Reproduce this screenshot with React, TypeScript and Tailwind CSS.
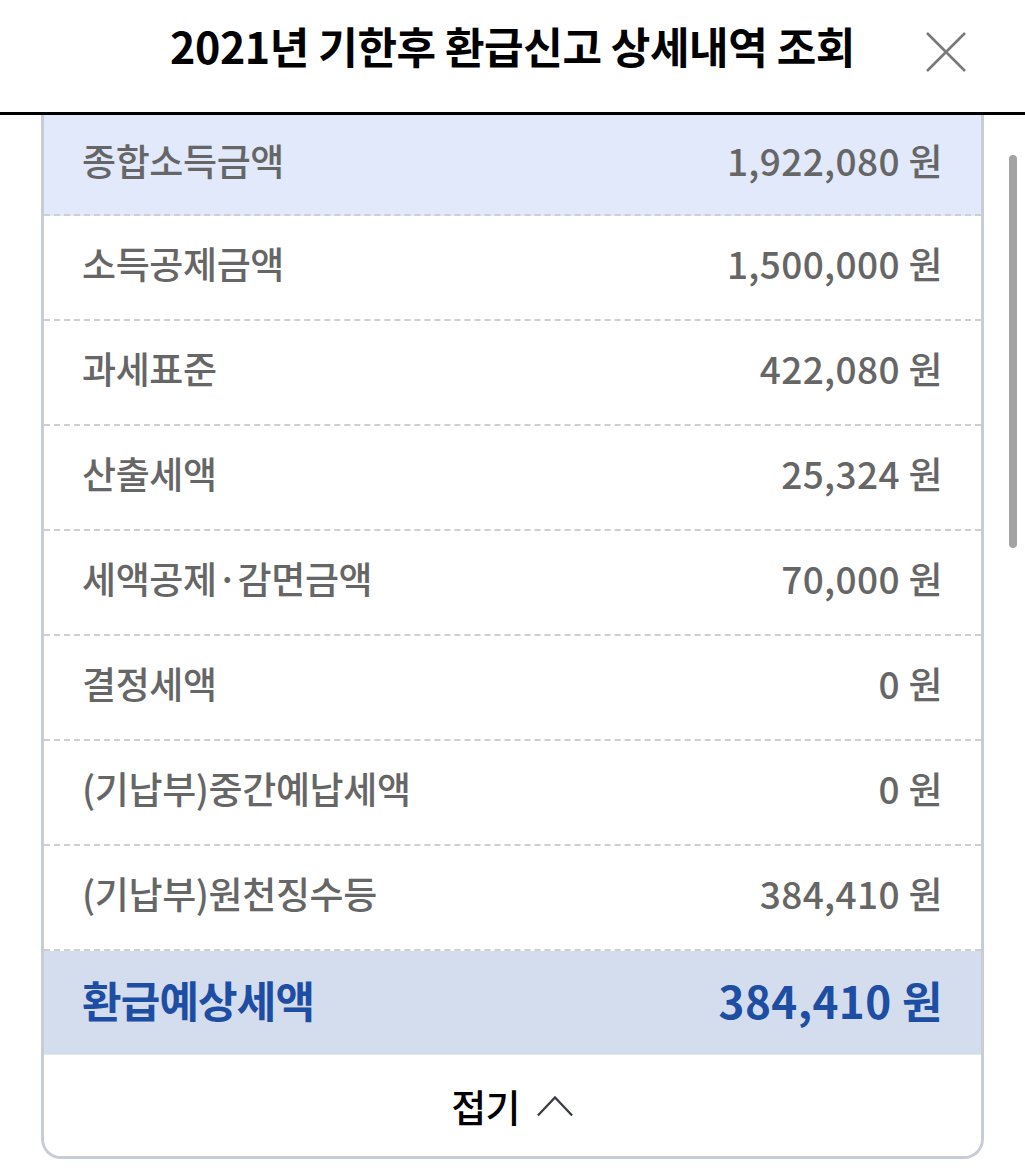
import React from "react";

const rows = [
  { label: "종합소득금액", value: "1,922,080" },
  { label: "소득공제금액", value: "1,500,000" },
  { label: "과세표준", value: "422,080" },
  { label: "산출세액", value: "25,324" },
  { label: "세액공제·감면금액", value: "70,000" },
  { label: "결정세액", value: "0" },
  { label: "(기납부)중간예납세액", value: "0" },
  { label: "(기납부)원천징수등", value: "384,410" },
];

const font = { fontFamily: '"Noto Sans CJK KR", "Noto Sans", sans-serif' };

export default function App() {
  return (
    <div className="relative w-[1025px] h-[1173px] bg-white overflow-hidden" style={font}>
      {/* Header */}
      <div className="relative h-[115px] flex items-center justify-center border-b-[3px] border-black">
        <h1 className="text-[43px] font-bold text-black tracking-[-0.01em] -mt-[22px]">
          2021년 기한후 환급신고 상세내역 조회
        </h1>
        <button className="absolute right-[58px] top-[31px] w-[42px] h-[42px]">
          <svg viewBox="0 0 42 42" className="w-full h-full">
            <path d="M2 2 L40 40 M40 2 L2 40" stroke="#7a7a7a" strokeWidth="2.6" fill="none" />
          </svg>
        </button>
      </div>

      {/* Card */}
      <div className="px-[41px]">
        <div className="border-x-[3px] border-b-[3px] border-[#c7ccd6] rounded-b-[20px] overflow-hidden">
          {rows.map((r, i) => (
            <div
              key={r.label}
              className={`flex items-center justify-between px-[38px] pb-[8px] ${
                i === 0 ? "h-[101px] bg-[#e2e9fb]" : "h-[105px] bg-white"
              } border-b-2 border-dashed border-[#cfcfcf]`}
            >
              <span className="text-[37px] font-medium text-[#666666] tracking-[-0.01em] leading-none">{r.label}</span>
              <span className="text-[37px] font-medium text-[#666666] tracking-[0.01em] leading-none">
                {r.value} 원
              </span>
            </div>
          ))}
          <div className="h-[104px] flex items-center justify-between px-[38px] pb-[6px] bg-[#d3ddee] border-b border-[#e4e8ee]">
            <span className="text-[43px] font-bold text-[#1d4ea3] tracking-[-0.02em] leading-none">환급예상세액</span>
            <span className="text-[44px] font-bold text-[#1d4ea3] tracking-[0.01em] leading-none">384,410 원</span>
          </div>
          <div className="h-[101px] flex items-center justify-center gap-[16px] bg-white">
            <span className="text-[38px] font-medium text-black tracking-[-0.02em] leading-none">접기</span>
            <svg viewBox="0 0 40 26" className="w-[38px] h-[26px]">
              <path d="M2 23 L20 4 L38 23" stroke="#3a3d44" strokeWidth="2.4" fill="none" />
            </svg>
          </div>
        </div>
      </div>

      {/* Scrollbar */}
      <div className="absolute left-[1009px] top-[155px] w-[8px] h-[393px] rounded-full bg-[#a3a3a3]" />
    </div>
  );
}
